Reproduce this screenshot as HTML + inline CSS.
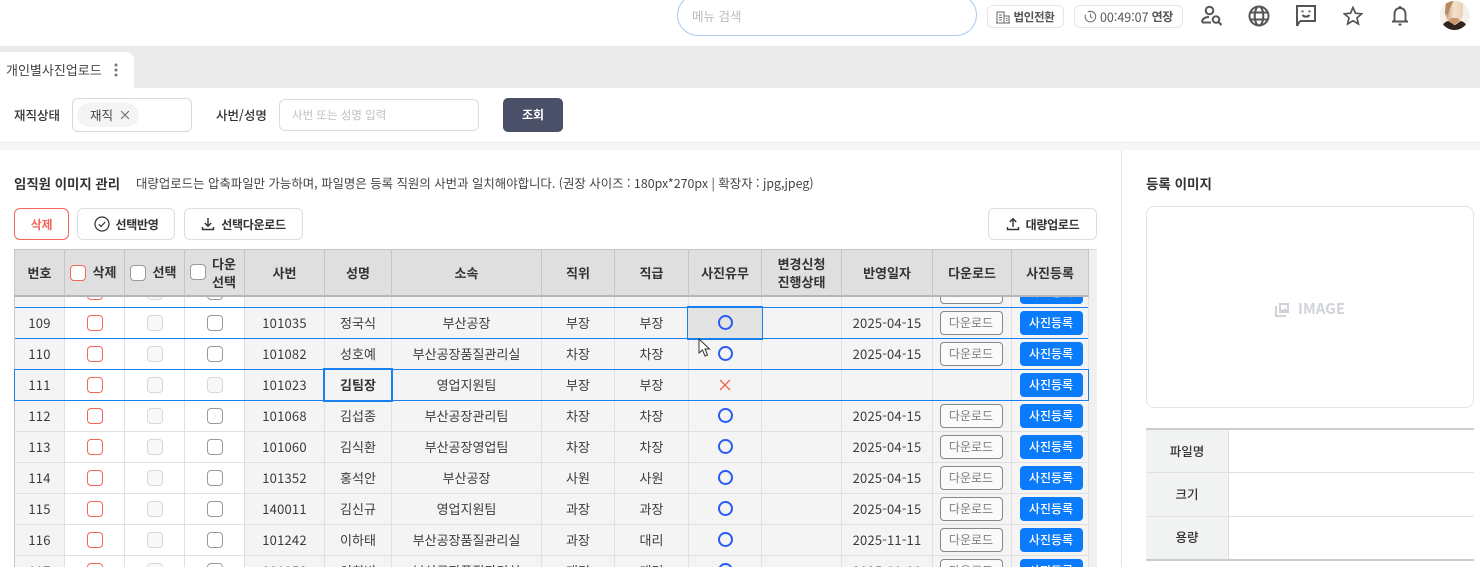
<!DOCTYPE html>
<html lang="ko"><head><meta charset="utf-8"><style>
*{box-sizing:border-box}
html,body{margin:0;padding:0;width:1480px;height:567px;overflow:hidden;background:#fff}
body{font-family:"Noto Sans CJK KR","Liberation Sans",sans-serif;font-size:13px;color:#333;position:relative}
.a{position:absolute}
.t{position:absolute;white-space:nowrap;line-height:18px}
.btn{position:absolute;top:208px;height:32px;border:1px solid #ddd;border-radius:6px;background:#fff;font-size:12px;font-weight:700;color:#333;display:flex;align-items:center;justify-content:center;gap:6px;letter-spacing:-.3px}
.chip{position:absolute;top:5px;height:23px;border:1px solid #e6e6e6;border-radius:6px;display:flex;align-items:center;justify-content:center;font-size:11.5px;color:#555;gap:3px;letter-spacing:-.3px}
table{border-collapse:separate;border-spacing:0;table-layout:fixed;width:1075px}
th{height:48px;background:#dfdfdf;border-right:1px solid #c6c6c6;border-bottom:2px solid #b5b5b5;border-top:1px solid #c6c6c6;font-size:13px;font-weight:700;color:#333;padding:0;line-height:18px;text-align:center}
th:first-child{border-left:1px solid #c6c6c6}
th.cb{padding-right:3px}
td{height:31px;background:#f4f4f4;border-right:1px solid #e0e0e0;border-bottom:1px solid #e0e0e0;text-align:center;padding:0 0 2px;font-size:13px;color:#3c3c3c;white-space:nowrap}
td:first-child{border-left:1px solid #c6c6c6}
td.w{background:#fff}
td.n{letter-spacing:.2px}
i.c{display:inline-block;width:16px;height:16px;border-radius:4px;border:1px solid #9a9a9a;background:#fff;vertical-align:middle;position:relative;top:-1px}
i.r{border-color:#f4655a}
i.d{border-color:#d8d8d8;background:#f8f8f8}
i.o{display:inline-block;width:15px;height:15px;border-radius:50%;border:2px solid #2a5cf5;vertical-align:middle;position:relative;top:-1px}
b.dl,b.up{display:inline-block;width:63px;height:24px;line-height:22px;border-radius:4px;font-size:12px;vertical-align:middle;position:relative;top:1px}
b.dl{border:1px solid #85888e;color:#808080;font-weight:400;background:#fafafa;left:-1px}
b.up{background:#0a7bfb;color:#fff;font-weight:500;line-height:24px;left:1px}
th i.c{margin-right:7px}
.hl{position:absolute;height:1px;background:#1a80f0}
</style></head><body>

<!-- top bar -->
<div class="a" style="left:677px;top:-6px;width:300px;height:42px;border:1px solid #a9cbf2;border-radius:21px"></div>
<div class="t" style="left:692px;top:7px;color:#bdbdbd;font-size:12.5px">메뉴 검색</div>
<div class="chip" style="left:987px;width:77px;font-weight:700">
<svg width="14" height="14" viewBox="0 0 14 14" fill="none" stroke="#666" stroke-width="1"><path d="M1 13V2h7v11M8 6h5v7M0 13h14M3 5h3M3 7.500h3M3 10h3M10 8.500h1.500M10 10.500h1.500"/></svg>법인전환</div>
<div class="chip" style="left:1074px;width:109px;font-size:12.500px;letter-spacing:0">
<svg width="13" height="13" viewBox="0 0 14 14" fill="none" stroke="#666" stroke-width="1.100"><path d="M4 2.200A5.700 5.700 0 1 1 1.600 5M7 1v1.500M7 4v3.300l2 1.500"/></svg>00:49:07 <span style="font-weight:700;font-size:12px;letter-spacing:-.3px">연장</span></div>

<svg class="a" style="left:1200px;top:5px" width="24" height="22" viewBox="0 0 24 22" fill="none" stroke="#555" stroke-width="2"><circle cx="9.500" cy="5.500" r="3.800"/><path d="M2 17c0-3 3-5 7-5M2 17.500h9"/><circle cx="16" cy="14.500" r="3.300"/><path d="M18.500 17l3 3"/></svg>
<svg class="a" style="left:1248px;top:5px" width="22" height="22" viewBox="0 0 22 22" fill="none" stroke="#555" stroke-width="2"><circle cx="11" cy="11" r="9.500"/><ellipse cx="11" cy="11" rx="4.300" ry="9.500"/><path d="M2 7.500h18M2 14.500h18"/></svg>
<svg class="a" style="left:1295px;top:4px" width="22" height="23" viewBox="0 0 22 23" fill="none" stroke="#555" stroke-width="2"><path d="M2 22V2h18v15H5"/><path d="M2 22l3-5" /><path d="M7.500 6.500v1.800M14.500 6.500v1.800" stroke-width="2"/><path d="M7.500 11c1.500 2.200 5.500 2.200 7 0"/></svg>
<svg class="a" style="left:1343px;top:6px" width="20" height="20" viewBox="0 0 20 20" fill="none" stroke="#555" stroke-width="1.700"><path d="M10 1.500l2.500 5.700 6.200.6-4.700 4.100 1.400 6.100L10 14.800l-5.400 3.200L6 11.900 1.300 7.800l6.200-.6z"/></svg>
<svg class="a" style="left:1391px;top:5px" width="18" height="22" viewBox="0 0 18 22" fill="none" stroke="#555" stroke-width="1.900"><path d="M3.500 16V9c0-3.500 2.300-6 5.500-6s5.500 2.500 5.500 6v7M1 16.500h16M9 1v2M7.500 19.500h3"/></svg>
<svg class="a" style="left:1439px;top:0" width="31" height="31" viewBox="0 0 31 31"><defs><clipPath id="av"><circle cx="15.500" cy="15.500" r="14.500"/></clipPath><linearGradient id="sk" x1="0" x2="1"><stop offset="0" stop-color="#c89a72"/><stop offset=".5" stop-color="#f4e0cc"/><stop offset="1" stop-color="#ecd0b4"/></linearGradient></defs><circle cx="15.500" cy="15.500" r="15" fill="#f4f0ec"/><g clip-path="url(#av)"><path d="M7 0h17v14l-3 9H10L6 14z" fill="url(#sk)"/><path d="M7 0h8l-4 8-2 7-3-2z" fill="#b58a62"/><path d="M2 31c0-5 3-9 7-10l7 4 6-4c4 1 7 5 7 10z" fill="#33221d"/><path d="M10 21l5 4 6-4-2-3h-7z" fill="#c9986f"/></g></svg>

<!-- tab bar -->
<div class="a" style="left:0;top:46px;width:1480px;height:42px;background:#ebebeb"></div>
<div class="a" style="left:0;top:52px;width:134px;height:36px;background:#fff;border-radius:0 8px 0 0"></div>
<div class="t" style="left:6px;top:61px;font-size:13px;color:#444">개인별사진업로드</div>
<svg class="a" style="left:113px;top:63px" width="6" height="14"><circle cx="3" cy="2" r="1.500" fill="#777"/><circle cx="3" cy="7" r="1.500" fill="#777"/><circle cx="3" cy="12" r="1.500" fill="#777"/></svg>

<!-- filter -->
<div class="a" style="left:0;top:142px;width:1480px;height:8px;background:#f6f6f6;border-top:1px solid #ececec"></div>
<div class="t" style="left:14px;top:106px;font-weight:500;font-size:12.500px">재직상태</div>
<div class="a" style="left:72px;top:98px;width:120px;height:34px;border:1px solid #d8d8de;border-radius:6px"></div>
<div class="a" style="left:77px;top:103px;width:62px;height:24px;background:#f4f4f4;border-radius:12px"></div>
<div class="t" style="left:90px;top:106px;font-size:12.500px;color:#444">재직</div>
<svg class="a" style="left:120px;top:110px" width="10" height="10" fill="none" stroke="#777" stroke-width="1.200"><path d="M1 1l8 8M9 1l-8 8"/></svg>
<div class="t" style="left:216px;top:106px;font-weight:500;font-size:12.500px">사번/성명</div>
<div class="a" style="left:279px;top:99px;width:200px;height:32px;border:1px solid #dcdcdc;border-radius:6px"></div>
<div class="t" style="left:292px;top:106px;font-size:11.500px;color:#c0c0c0">사번 또는 성명 입력</div>
<div class="a" style="left:503px;top:98px;width:60px;height:34px;background:#4a5068;border-radius:5px;color:#fff;font-size:12px;font-weight:700;text-align:center;line-height:33px">조회</div>

<!-- title -->
<div class="t" style="left:14px;top:174px;font-weight:700;font-size:13.400px;color:#333">임직원 이미지 관리</div>
<div class="t" style="left:136px;top:174px;font-size:12.420px;color:#444">대량업로드는 압축파일만 가능하며, 파일명은 등록 직원의 사번과 일치해야합니다. (권장 사이즈 : 180px*270px | 확장자 : jpg,jpeg)</div>

<div class="btn" style="left:14px;width:55px;border-color:#f4655a;color:#f4655a">삭제</div>
<div class="btn" style="left:77px;width:98px;gap:6px"><svg width="16" height="16" viewBox="0 0 16 16" fill="none" stroke="#333" stroke-width="1.200"><circle cx="8" cy="8" r="7"/><path d="M4.800 8.300l2.200 2.200 4.200-4.500"/></svg>선택반영</div>
<div class="btn" style="left:184px;width:119px"><svg width="14" height="14" viewBox="0 0 14 14" fill="none" stroke="#333" stroke-width="1.400"><path d="M7 1v8M3.800 6L7 9.200 10.200 6M1.500 10v2.500h11V10"/></svg>선택다운로드</div>
<div class="btn" style="left:988px;width:109px"><svg width="14" height="14" viewBox="0 0 14 14" fill="none" stroke="#333" stroke-width="1.400"><path d="M7 10V2M3.800 5L7 1.800 10.200 5M1.500 10v2.500h11V10"/></svg>대량업로드</div>

<!-- grid -->
<div class="a" style="left:1089px;top:249px;width:8px;height:318px;background:#f0f0f0;border-top:1px solid #d8d8d8"></div>
<div class="a" style="left:14px;top:249px;width:1075px;height:48px;overflow:hidden">
<table><colgroup><col width="51"><col width="60"><col width="60"><col width="60"><col width="80"><col width="67"><col width="150"><col width="73"><col width="74"><col width="73"><col width="80"><col width="91"><col width="79"><col width="77"></colgroup>
<tr><th>번호</th><th class="cb"><i class="c r"></i>삭제</th><th class="cb"><i class="c"></i>선택</th><th style="text-align:left;padding-left:5px"><div style="display:flex;align-items:center"><i class="c" style="flex:none;margin-right:6px"></i><span style="text-align:center">다운<br>선택</span></div></th><th>사번</th><th>성명</th><th>소속</th><th>직위</th><th>직급</th><th>사진유무</th><th>변경신청<br>진행상태</th><th>반영일자</th><th>다운로드</th><th>사진등록</th></tr></table>
</div>
<div class="a" style="left:14px;top:297px;width:1075px;height:270px;overflow:hidden">
<table style="margin-top:-20px"><colgroup><col width="51"><col width="60"><col width="60"><col width="60"><col width="80"><col width="67"><col width="150"><col width="73"><col width="74"><col width="73"><col width="80"><col width="91"><col width="79"><col width="77"></colgroup>
<tr><td></td><td class="w"><i class="c r"></i></td><td class="w"><i class="c d"></i></td><td class="w"><i class="c"></i></td><td></td><td></td><td></td><td></td><td></td><td></td><td></td><td></td><td><b class="dl">다운로드</b></td><td><b class="up">사진등록</b></td></tr>
<tr><td class="n">109</td><td class="w"><i class="c r"></i></td><td class="w"><i class="c d"></i></td><td class="w"><i class="c"></i></td><td class="n">101035</td><td>정국식</td><td>부산공장</td><td>부장</td><td>부장</td><td style="background:#e3e3e3"><i class="o"></i></td><td></td><td class="n">2025-04-15</td><td><b class="dl">다운로드</b></td><td><b class="up">사진등록</b></td></tr>
<tr><td class="n">110</td><td class="w"><i class="c r"></i></td><td class="w"><i class="c d"></i></td><td class="w"><i class="c"></i></td><td class="n">101082</td><td>성호예</td><td>부산공장품질관리실</td><td>차장</td><td>차장</td><td><i class="o"></i></td><td></td><td class="n">2025-04-15</td><td><b class="dl">다운로드</b></td><td><b class="up">사진등록</b></td></tr>
<tr><td class="n">111</td><td class="w"><i class="c r"></i></td><td class="w"><i class="c d"></i></td><td class="w"><i class="c d"></i></td><td class="n">101023</td><td style="font-weight:700;color:#333">김팀장</td><td>영업지원팀</td><td>부장</td><td>부장</td><td><svg width="12" height="12" style="vertical-align:middle;position:relative;top:-1px" fill="none" stroke="#ee6044" stroke-width="1.300"><path d="M1 1l10 10M11 1L1 11"/></svg></td><td></td><td></td><td></td><td><b class="up">사진등록</b></td></tr>
<tr><td class="n">112</td><td class="w"><i class="c r"></i></td><td class="w"><i class="c d"></i></td><td class="w"><i class="c"></i></td><td class="n">101068</td><td>김섭종</td><td>부산공장관리팀</td><td>차장</td><td>차장</td><td><i class="o"></i></td><td></td><td class="n">2025-04-15</td><td><b class="dl">다운로드</b></td><td><b class="up">사진등록</b></td></tr>
<tr><td class="n">113</td><td class="w"><i class="c r"></i></td><td class="w"><i class="c d"></i></td><td class="w"><i class="c"></i></td><td class="n">101060</td><td>김식환</td><td>부산공장영업팀</td><td>차장</td><td>차장</td><td><i class="o"></i></td><td></td><td class="n">2025-04-15</td><td><b class="dl">다운로드</b></td><td><b class="up">사진등록</b></td></tr>
<tr><td class="n">114</td><td class="w"><i class="c r"></i></td><td class="w"><i class="c d"></i></td><td class="w"><i class="c"></i></td><td class="n">101352</td><td>홍석안</td><td>부산공장</td><td>사원</td><td>사원</td><td><i class="o"></i></td><td></td><td class="n">2025-04-15</td><td><b class="dl">다운로드</b></td><td><b class="up">사진등록</b></td></tr>
<tr><td class="n">115</td><td class="w"><i class="c r"></i></td><td class="w"><i class="c d"></i></td><td class="w"><i class="c"></i></td><td class="n">140011</td><td>김신규</td><td>영업지원팀</td><td>과장</td><td>과장</td><td><i class="o"></i></td><td></td><td class="n">2025-04-15</td><td><b class="dl">다운로드</b></td><td><b class="up">사진등록</b></td></tr>
<tr><td class="n">116</td><td class="w"><i class="c r"></i></td><td class="w"><i class="c d"></i></td><td class="w"><i class="c"></i></td><td class="n">101242</td><td>이하태</td><td>부산공장품질관리실</td><td>과장</td><td>대리</td><td><i class="o"></i></td><td></td><td class="n">2025-11-11</td><td><b class="dl">다운로드</b></td><td><b class="up">사진등록</b></td></tr>
<tr><td class="n">117</td><td class="w"><i class="c r"></i></td><td class="w"><i class="c d"></i></td><td class="w"><i class="c"></i></td><td class="n">101058</td><td>이희빈</td><td>부산공장품질관리실</td><td>대리</td><td>대리</td><td><i class="o"></i></td><td></td><td class="n">2025-11-11</td><td><b class="dl">다운로드</b></td><td><b class="up">사진등록</b></td></tr>
</table></div>

<!-- selection overlays -->
<div class="hl" style="left:15px;top:307px;width:1073px"></div>
<div class="hl" style="left:15px;top:338px;width:1073px"></div>
<div class="a" style="left:14px;top:369px;width:1075px;height:32px;border:1px solid #1a80f0"></div>
<div class="a" style="left:687px;top:306px;width:76px;height:34px;border:1px solid #1a80f0"></div>
<div class="a" style="left:323px;top:368px;width:70px;height:34px;border:2px solid #1a80f0"></div>
<svg class="a" style="left:698px;top:338px" width="14" height="20" viewBox="0 0 14 20"><path d="M1 1v14l3.500-3 2.500 6 2.500-1-2.500-6h4.500z" fill="#fff" stroke="#333" stroke-width="1"/></svg>

<!-- right panel -->
<div class="a" style="left:1121px;top:150px;width:1px;height:417px;background:#e2e2e2"></div>
<div class="t" style="left:1146px;top:174px;font-weight:700;font-size:13.500px;color:#333">등록 이미지</div>
<div class="a" style="left:1146px;top:206px;width:328px;height:202px;border:1px solid #e4e4e4;border-radius:8px"></div>
<svg class="a" style="left:1275px;top:302px" width="15" height="15" viewBox="0 0 15 15"><path d="M4 1h10v10H4z" fill="#d0d4d8"/><path d="M6 3h6v5l-2-2-2 2-2-1z" fill="#fff"/><path d="M1 4v10h10" fill="none" stroke="#d0d4d8" stroke-width="2"/></svg>
<div class="t" style="left:1298px;top:299px;font-size:15px;font-weight:700;color:#d0d4d8;line-height:20px">IMAGE</div>
<div class="a" style="left:1146px;top:428px;width:328px;height:133px;border-top:2px solid #cbcdd0;border-bottom:2px solid #cbcdd0"></div>
<div class="a" style="left:1146px;top:430px;width:83px;height:129px;background:#f1f2f2;border-right:1px solid #ddd"></div>
<div class="a" style="left:1146px;top:472px;width:328px;height:1px;background:#e0e0e0"></div>
<div class="a" style="left:1146px;top:516px;width:328px;height:1px;background:#e0e0e0"></div>
<div class="t" style="left:1146px;top:442px;width:82px;text-align:center;font-size:12.500px;font-weight:500">파일명</div>
<div class="t" style="left:1146px;top:485px;width:82px;text-align:center;font-size:12.500px;font-weight:500">크기</div>
<div class="t" style="left:1146px;top:528px;width:82px;text-align:center;font-size:12.500px;font-weight:500">용량</div>
</body></html>
